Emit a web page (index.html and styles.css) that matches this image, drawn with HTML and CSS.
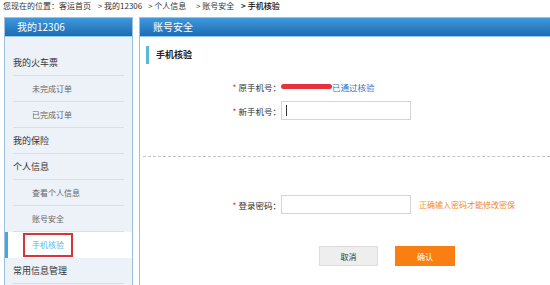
FILE: index.html
```html
<!DOCTYPE html>
<html lang="zh-CN">
<head>
  <meta charset="UTF-8">
  <title>手机核验</title>
  <link rel="stylesheet" href="styles.css">
</head>
<body>

  <!-- breadcrumb -->
  <div class="crumbs">
    <span>您现在的位置：客运首页</span>
    <span class="crumb first">&gt; 我的12306</span>
    <span class="crumb">&gt; 个人信息</span>
    <span class="crumb wide">&gt; 账号安全</span>
    <span class="crumb current">&gt; 手机核验</span>
  </div>

  <div class="main">
    <!-- left menu -->
    <div class="side">
      <div class="side-head">我的12306</div>
      <ul class="menu">
        <li class="top">我的火车票</li>
        <li class="sub">未完成订单</li>
        <li class="sub">已完成订单</li>
        <li class="top">我的保险</li>
        <li class="top">个人信息</li>
        <li class="sub">查看个人信息</li>
        <li class="sub">账号安全</li>
        <li class="sub active"><span class="mark">手机核验</span></li>
        <li class="top">常用信息管理</li>
      </ul>
    </div>

    <!-- content -->
    <div class="panel">
      <div class="panel-head">账号安全</div>
      <div class="panel-body">
        <div class="title">手机核验</div>

        <div class="form-row first">
          <label class="label"><span class="star">*</span> 原手机号：</label>
          <span class="scribble"></span><a class="link" href="#">已通过核验</a>
        </div>
        <div class="form-row">
          <label class="label" for="newPhone"><span class="star">*</span> 新手机号：</label>
          <span class="field">
            <input type="text" id="newPhone">
            <span class="caret"></span>
          </span>
        </div>

        <div class="dash"></div>

        <div class="form-row">
          <label class="label" for="pwd"><span class="star">*</span> 登录密码：</label>
          <span class="field"><input type="password" id="pwd"></span>
          <span class="hint">正确输入密码才能修改密保</span>
        </div>

        <div class="buttons">
          <button class="btn cancel">取消</button>
          <button class="btn ok">确认</button>
        </div>
      </div>
    </div>
  </div>

</body>
</html>
```

FILE: styles.css
```css
body {
  margin: 0;
  font-family: "Noto Sans CJK SC", "Liberation Sans", sans-serif;
  font-size: 9px;
  color: #333;
  background-color: #fff;
  overflow: hidden;
}
.crumbs {
  height: 17px;
  padding-left: 3px;
  font-size: 8px;
  line-height: 12px;
  color: #333;
  white-space: nowrap;
}
.crumb {
  margin-left: 4px;
}
.crumb.first {
  margin-left: 5px;
}
.crumb.wide {
  margin-left: 8px;
}
.crumb.current {
  margin-left: 5px;
  font-weight: bold;
}
.main {
  display: flex;
  padding-left: 4px;
  gap: 6px;
  height: 268px;
}
.side {
  width: 127px;
  flex: none;
  border: 1px solid #9cc1df;
  border-bottom: none;
  background-color: #edf1f8;
}
.side-head,
.panel-head {
  height: 18px;
  line-height: 17px;
  color: #fff;
  background: linear-gradient(#3f98dc, #1b6cb4);
  border-bottom: 1px solid #8fcff0;
  font-size: 10px;
}
.side-head {
  padding-left: 12px;
}
.menu {
  list-style: none;
  margin: 0;
  padding: 13px 0 0 0;
}
.menu li {
  height: 26px;
  line-height: 26px;
  position: relative;
}
.menu li::after {
  content: "";
  position: absolute;
  left: 8px;
  right: 8px;
  bottom: 0;
  border-bottom: 1px solid #d9dfe8;
}
.menu .top {
  padding-left: 8px;
  font-size: 9px;
  color: #333;
}
.menu .sub {
  padding-left: 27px;
  font-size: 8px;
  color: #666;
}
.menu .active {
  background-color: #fff;
  border-left: 3px solid #4aa6d6;
  padding-left: 15px;
  color: #5bb7e0;
}
.menu .active::after {
  display: none;
}
.mark {
  display: inline-block;
  height: 20px;
  line-height: 20px;
  padding: 0 7px;
  margin-top: 1px;
  border: 2px solid #d8353a;
  vertical-align: top;
}
.panel {
  width: 440px;
  flex: none;
  border: 1px solid #9cc1df;
  border-bottom: none;
}
.panel-head {
  padding-left: 13px;
}
.panel-body {
  padding: 9px 0 0 6px;
}
.title {
  height: 18px;
  line-height: 18px;
  border-left: 3px solid #5ab9da;
  padding-left: 7px;
  font-weight: bold;
  font-size: 9px;
  color: #222;
}
.form-row {
  display: flex;
  align-items: center;
  height: 19px;
  margin-top: 5px;
  font-size: 8.5px;
}
.form-row.first {
  margin-top: 13px;
}
.label {
  width: 135px;
  flex: none;
  text-align: right;
  color: #333;
}
.star {
  color: #e2363a;
}
.scribble {
  display: inline-block;
  width: 51px;
  height: 5px;
  border-radius: 3px;
  background-color: #e5323b;
}
.link {
  color: #2f73c9;
  text-decoration: none;
}
.field {
  position: relative;
  display: inline-block;
}
.field input {
  display: block;
  width: 130px;
  height: 19px;
  box-sizing: border-box;
  border: 1px solid #d4d4d4;
  padding: 0 4px;
  margin: 0;
  outline: none;
}
.caret {
  position: absolute;
  left: 5px;
  top: 4px;
  width: 1px;
  height: 11px;
  background-color: #333;
}
.hint {
  margin-left: 8px;
  font-size: 8px;
  color: #f08a1e;
  white-space: nowrap;
}
.dash {
  margin: 36px 0 0 -3px;
  border-top: 1px dashed #c4c4c4;
}
.dash + .form-row {
  margin-top: 38px;
}
.buttons {
  display: flex;
  gap: 17px;
  padding-left: 173px;
  margin-top: 32px;
}
.btn {
  width: 59px;
  height: 20px;
  border: 1px solid #ddd;
  font-family: inherit;
  font-size: 8px;
  padding: 0;
  cursor: pointer;
}
.btn.cancel {
  background-color: #eee;
  color: #333;
}
.btn.ok {
  width: 60px;
  background-color: #fa7f12;
  border-color: #fa7f12;
  color: #fff;
}
```
